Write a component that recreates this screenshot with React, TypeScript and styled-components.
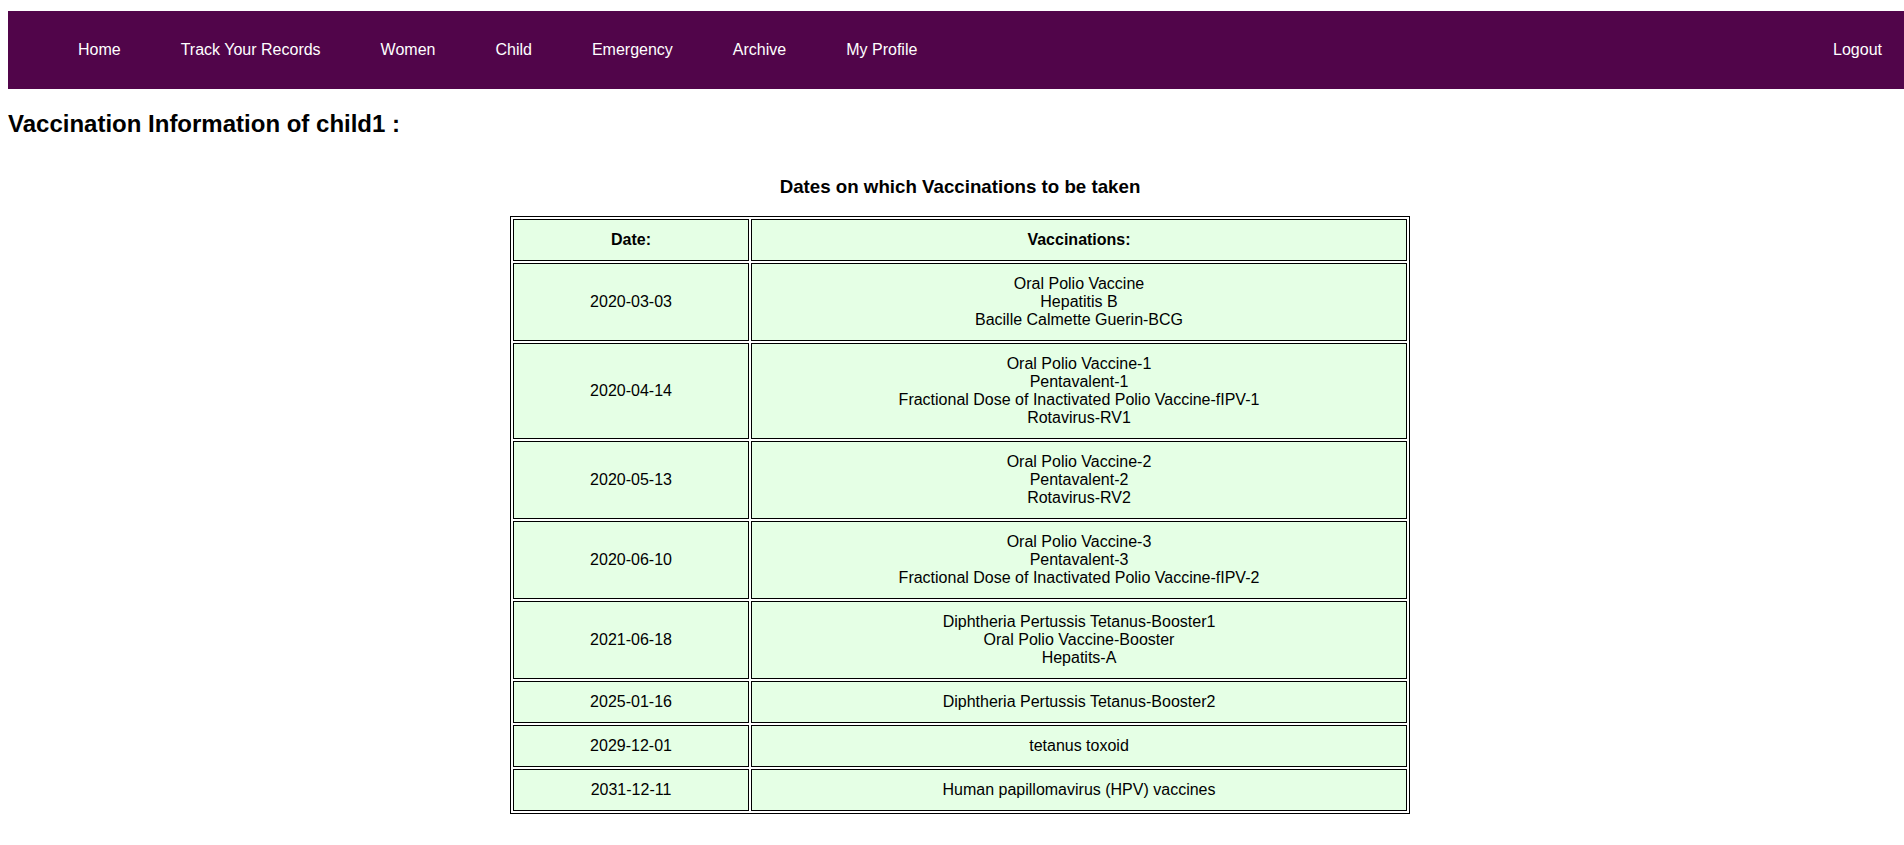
import React from "react";
import styled, { createGlobalStyle } from "styled-components";

const GlobalStyle = createGlobalStyle`
  html, body {
    margin: 0;
    padding: 0;
    overflow-x: hidden;
    background: #ffffff;
    font-family: "Liberation Sans", Arial, sans-serif;
    color: #000000;
  }
`;

const Page = styled.div`
  width: 100vw;
  margin-left: 8px;
  padding-top: 11px;
  padding-bottom: 8px;
`;

const NavBar = styled.nav`
  display: flex;
  align-items: center;
  height: 78px;
  padding-left: 40px;
  background: #51054a;
  box-sizing: border-box;
`;

const NavLink = styled.a<{ $right?: boolean }>`
  padding: 0 30px;
  color: #ffffff;
  font-size: 16px;
  line-height: 18px;
  text-decoration: none;
  white-space: nowrap;
  cursor: pointer;
  margin-left: ${(p) => (p.$right ? "auto" : "0")};
`;

const Title = styled.h2`
  margin: 21px 0 0 0;
  font-size: 24px;
  font-weight: bold;
  line-height: 27.6px;
`;

const Subtitle = styled.h3`
  margin: 38px 0 18.5px 0;
  font-size: 18.72px;
  font-weight: bold;
  line-height: 21.5px;
  text-align: center;
`;

const Table = styled.table`
  width: 900px;
  margin: 0 auto;
  border: 1px solid #000000;
  border-collapse: separate;
  border-spacing: 2px;
  table-layout: fixed;
`;

const HeadCell = styled.th`
  border: 1px solid #000000;
  background: #e5ffe5;
  padding: 11px 10px;
  font-size: 16px;
  line-height: 18px;
  font-weight: bold;
  text-align: center;
`;

const Cell = styled.td`
  border: 1px solid #000000;
  background: #e5ffe5;
  padding: 11px 10px;
  font-size: 16px;
  line-height: 18px;
  text-align: center;
  vertical-align: middle;
`;

const Line = styled.div`
  white-space: nowrap;
`;

const rows: { date: string; vaccines: string[] }[] = [
  {
    date: "2020-03-03",
    vaccines: ["Oral Polio Vaccine", "Hepatitis B", "Bacille Calmette Guerin-BCG"],
  },
  {
    date: "2020-04-14",
    vaccines: [
      "Oral Polio Vaccine-1",
      "Pentavalent-1",
      "Fractional Dose of Inactivated Polio Vaccine-fIPV-1",
      "Rotavirus-RV1",
    ],
  },
  {
    date: "2020-05-13",
    vaccines: ["Oral Polio Vaccine-2", "Pentavalent-2", "Rotavirus-RV2"],
  },
  {
    date: "2020-06-10",
    vaccines: [
      "Oral Polio Vaccine-3",
      "Pentavalent-3",
      "Fractional Dose of Inactivated Polio Vaccine-fIPV-2",
    ],
  },
  {
    date: "2021-06-18",
    vaccines: [
      "Diphtheria Pertussis Tetanus-Booster1",
      "Oral Polio Vaccine-Booster",
      "Hepatits-A",
    ],
  },
  { date: "2025-01-16", vaccines: ["Diphtheria Pertussis Tetanus-Booster2"] },
  { date: "2029-12-01", vaccines: ["tetanus toxoid"] },
  { date: "2031-12-11", vaccines: ["Human papillomavirus (HPV) vaccines"] },
];

const navItems = [
  "Home",
  "Track Your Records",
  "Women",
  "Child",
  "Emergency",
  "Archive",
  "My Profile",
];

export default function App() {
  return (
    <>
      <GlobalStyle />
      <Page>
        <NavBar>
          {navItems.map((n) => (
            <NavLink key={n}>{n}</NavLink>
          ))}
          <NavLink $right>Logout</NavLink>
        </NavBar>
        <Title>Vaccination Information of child1 :</Title>
        <Subtitle>Dates on which Vaccinations to be taken</Subtitle>
        <Table>
          <colgroup>
            <col style={{ width: 236 }} />
            <col />
          </colgroup>
          <thead>
            <tr>
              <HeadCell>Date:</HeadCell>
              <HeadCell>Vaccinations:</HeadCell>
            </tr>
          </thead>
          <tbody>
            {rows.map((r) => (
              <tr key={r.date}>
                <Cell>{r.date}</Cell>
                <Cell>
                  {r.vaccines.map((v) => (
                    <Line key={v}>{v}</Line>
                  ))}
                </Cell>
              </tr>
            ))}
          </tbody>
        </Table>
      </Page>
    </>
  );
}
